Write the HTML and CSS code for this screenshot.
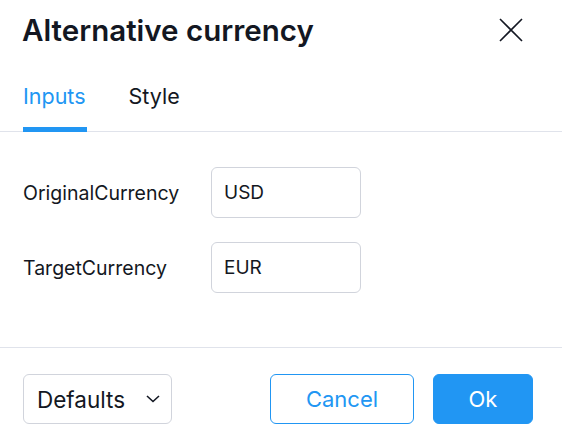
FILE: index.html
```html
<!DOCTYPE html>
<html>
<head>
<meta charset="utf-8">
<link rel="stylesheet" href="styles.css">
</head>
<body>
<div class="dialog">
  <div class="header">
    <h1 class="title">Alternative currency</h1>
    <button class="close" aria-label="Close">
      <svg width="24" height="24" viewBox="0 0 24 24"><path d="M1 1L23 23M23 1L1 23" stroke="#131722" stroke-width="1.6" fill="none"/></svg>
    </button>
  </div>
  <div class="tabs">
    <div class="tab active">Inputs</div>
    <div class="tab">Style</div>
  </div>
  <div class="content">
    <div class="row">
      <label class="label">OriginalCurrency</label>
      <div class="input">USD</div>
    </div>
    <div class="row">
      <label class="label">TargetCurrency</label>
      <div class="input">EUR</div>
    </div>
  </div>
  <div class="footer">
    <button class="btn defaults">Defaults
      <svg width="14" height="8" viewBox="0 0 14 8"><path d="M1 1L7 6.5L13 1" stroke="#131722" stroke-width="1.6" fill="none"/></svg>
    </button>
    <div class="actions">
      <button class="btn cancel">Cancel</button>
      <button class="btn ok">Ok</button>
    </div>
  </div>
</div>
</body>
</html>
```
FILE: styles.css
```css
* { box-sizing: border-box; }
html, body { margin: 0; padding: 0; background: #fff; }
body {
  font-family: Inter, "Open Sans", sans-serif;
  color: #131722;
}
.dialog { width: 562px; height: 439px; display: flex; flex-direction: column; }
.header {
  display: flex;
  align-items: center;
  justify-content: space-between;
  padding: 2px 39px 0 22px;
  height: 58px;
}
.title {
  margin: 0;
  font-size: 29.5px;
  font-weight: 600;
  letter-spacing: 0;
  line-height: 34px;
}
.close {
  border: 0; background: none; padding: 0; width: 24px; height: 24px;
  display: block; cursor: pointer;
}
.close svg { display: block; }
.tabs {
  display: flex;
  gap: 41px;
  padding: 0 22px;
  margin-top: 23px;
  border-bottom: 1px solid #e0e3eb;
  height: 51px;
}
.tab {
  position: relative;
  font-size: 21.5px;
  line-height: 30px;
  padding: 0 1px;
}
.tab.active { color: #2196f3; }
.tab.active::after {
  content: "";
  position: absolute;
  left: 1px; right: 0;
  bottom: -1px;
  height: 5px;
  background: #2196f3;
}
.content {
  flex: 1;
  padding: 35px 22px 0 23px;
  display: flex;
  flex-direction: column;
  gap: 24px;
  border-bottom: 1px solid #e0e3eb;
}
.row { display: flex; align-items: center; }
.label { width: 188px; font-size: 19.5px; }
.input {
  width: 150px; height: 51px;
  border: 1px solid #d1d4dc;
  border-radius: 6px;
  padding: 0 12px;
  display: flex; align-items: center;
  font-size: 19px;
}
.footer {
  height: 91px;
  display: flex;
  align-items: flex-start;
  justify-content: space-between;
  padding: 26px 29px 0 23px;
}
.actions { display: flex; gap: 19px; }
.btn {
  font-family: inherit;
  height: 50px;
  border-radius: 6px;
  font-size: 22px;
  background: #fff;
  cursor: pointer;
  display: flex; align-items: center; justify-content: center;
}
.defaults {
  width: 149px;
  border: 1px solid #d1d4dc;
  color: #131722;
  justify-content: space-between;
  padding: 0 11px 0 13px;
  font-size: 22.5px;
}
.defaults svg { display: block; }
.cancel {
  width: 144px;
  border: 1px solid #2196f3;
  color: #2196f3;
}
.ok {
  width: 100px;
  border: 1px solid #2196f3;
  background: #2196f3;
  color: #fff;
}
```
